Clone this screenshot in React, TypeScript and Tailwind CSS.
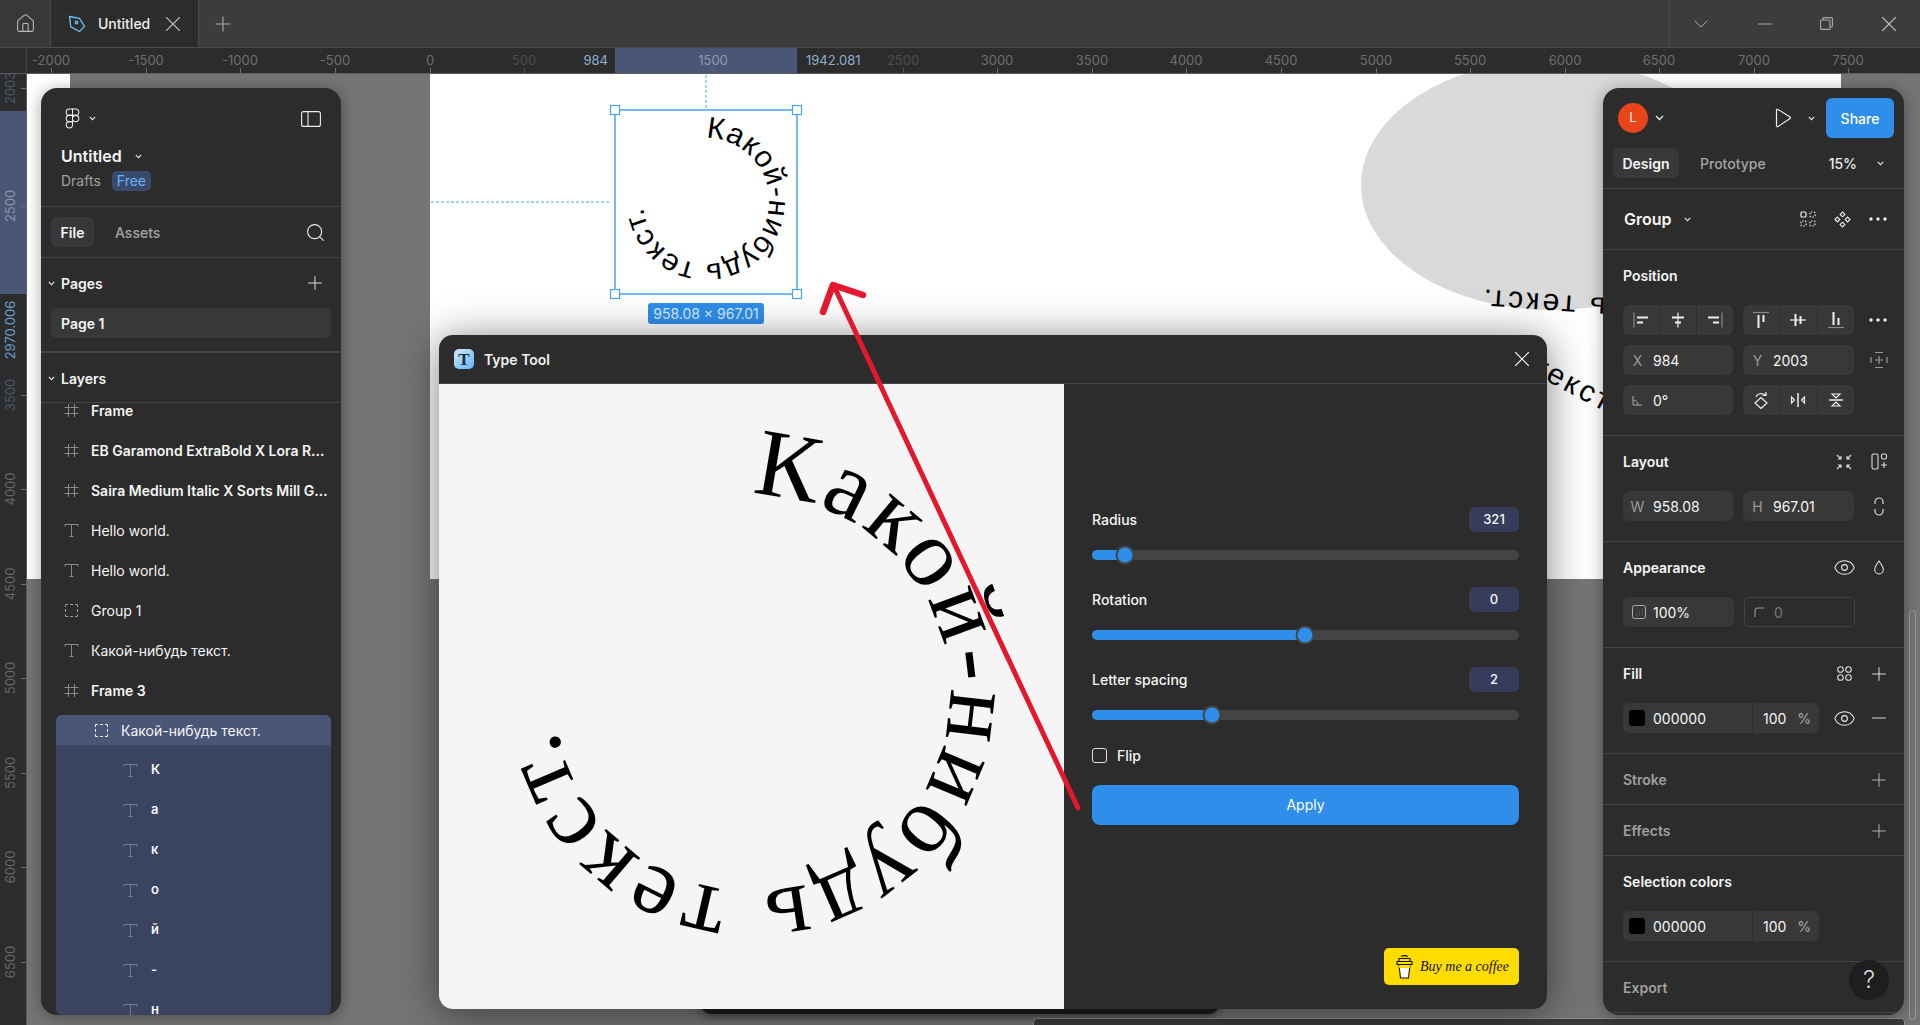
import { ChevronDown, Eye, House, Minus, Plus, Search, X } from "lucide-react";
import type { ReactNode } from "react";

const xTicks = [
  { v: "-2000", x: 51 },
  { v: "-1500", x: 146 },
  { v: "-1000", x: 240 },
  { v: "-500", x: 335 },
  { v: "0", x: 430 },
  { v: "500", x: 524, dim: true },
  { v: "1500", x: 713, tick: "sel" },
  { v: "2500", x: 903, dim: true },
  { v: "3000", x: 997 },
  { v: "3500", x: 1092 },
  { v: "4000", x: 1186 },
  { v: "4500", x: 1281 },
  { v: "5000", x: 1376 },
  { v: "5500", x: 1470 },
  { v: "6000", x: 1565 },
  { v: "6500", x: 1659 },
  { v: "7000", x: 1754 },
  { v: "7500", x: 1848 },
];

const yTicks = [
  { v: "2003", y: 88, dim: true },
  { v: "2500", y: 206, sel: true },
  { v: "3500", y: 395, dim: true },
  { v: "4000", y: 489 },
  { v: "4500", y: 584 },
  { v: "5000", y: 678 },
  { v: "5500", y: 773 },
  { v: "6000", y: 867 },
  { v: "6500", y: 962 },
];

function FigmaLogo() {
  return (
    <svg width="17" height="21" viewBox="0 0 14 20" fill="none" stroke="#f0f0f0" strokeWidth="1">
      <path d="M7 1H4a3 3 0 0 0 0 6h3z" />
      <path d="M7 1h3a3 3 0 0 1 0 6H7z" />
      <path d="M7 7H4a3 3 0 0 0 0 6h3z" />
      <circle cx="10" cy="10" r="3" />
      <path d="M4 13h3v3a3 3 0 1 1-3-3z" />
    </svg>
  );
}

function Chev({ small }: { small?: boolean }) {
  return (
    <svg width={small ? 7 : 9} height={small ? 5 : 6} viewBox="0 0 9 6" fill="none" stroke="#eee" strokeWidth="1.3">
      <path d="M1 1l3.5 3.5L8 1" />
    </svg>
  );
}

function HashIcon() {
  return (
    <svg width="15" height="15" viewBox="0 0 15 15" fill="none" stroke="#8a8a8a" strokeWidth="1">
      <path d="M4.5 1v13M10.5 1v13M0.5 4.5h14M0.5 10.5h14" />
    </svg>
  );
}

function TextIcon({ dim }: { dim?: boolean }) {
  return (
    <svg width="15" height="15" viewBox="0 0 15 15" fill="none" stroke={dim ? "#707a96" : "#8a8a8a"} strokeWidth="1">
      <path d="M1 3.5V1.5h13v2M7.5 1.5v12M5.5 13.5h4" />
    </svg>
  );
}

function GroupIcon({ bright }: { bright?: boolean }) {
  return (
    <svg width="13" height="13" viewBox="0 0 13 13" fill="none" stroke={bright ? "#f0f0f0" : "#9a9a9a"} strokeWidth="1">
      <path d="M0.5 3V.5H3M5 .5h3M10 .5h2.5V3M12.5 5v3M12.5 10v2.5H10M8 12.5H5M3 12.5H.5V10M.5 8V5" />
    </svg>
  );
}

function Icon({ children, w = 18, h = 18, stroke = "#eee" }: { children: ReactNode; w?: number; h?: number; stroke?: string }) {
  return (
    <svg width={w} height={h} viewBox={`0 0 ${w} ${h}`} fill="none" stroke={stroke} strokeWidth="1.2">
      {children}
    </svg>
  );
}

function Dots() {
  return (
    <svg width="18" height="4" viewBox="0 0 18 4" fill="#f0f0f0">
      <circle cx="2" cy="2" r="1.7" />
      <circle cx="9" cy="2" r="1.7" />
      <circle cx="16" cy="2" r="1.7" />
    </svg>
  );
}

function Ruler() {
  return (
    <div className="relative h-[26px] border-b border-[#5c5c5c] bg-[#2c2c2c]">
      <div className="absolute top-0 left-0 h-full w-[27px] border-r border-[#444]" />
      <div className="absolute top-0 left-[615px] h-full w-[182px] bg-[#4a5675]" />
      {xTicks.map((t) => (
        <div key={t.v} className="absolute top-0 h-full" style={{ left: t.x }}>
          <span
            className={`absolute top-[2px] -translate-x-1/2 text-[13px] leading-[20px] ${
              t.dim ? "text-[#4c4c4c]" : t.tick ? "text-[#9099ad]" : "text-[#6e6e6e]"
            }`}
          >
            {t.v}
          </span>
          <span className={`absolute bottom-0 left-0 h-[5px] w-px ${t.dim ? "bg-[#555]" : "bg-[#6e6e6e]"}`} />
        </div>
      ))}
      <span className="absolute top-[2px] right-[1312px] text-[13px] leading-[20px] text-[#8ab0d2]">984</span>
      <span className="absolute top-[2px] left-[806px] text-[13px] leading-[20px] text-[#8ab0d2]">1942.081</span>
    </div>
  );
}

function SideRuler() {
  return (
    <div className="relative h-full w-[27px] shrink-0 overflow-hidden border-r border-[#5c5c5c] bg-[#2c2c2c]">
      <div className="absolute top-[37px] left-0 h-[183px] w-full bg-[#4a5675]" />
      {yTicks.map((t) => (
        <div key={t.v} className="absolute left-0 w-full" style={{ top: t.y - 74 }}>
          <span
            className={`absolute top-0 left-[10px] -translate-x-1/2 -translate-y-1/2 -rotate-90 text-[13px] leading-[16px] ${
              t.sel ? "text-[#8a93aa]" : t.dim ? "text-[#4a5668]" : "text-[#666]"
            }`}
          >
            {t.v}
          </span>
          <span className="absolute top-0 right-0 h-px w-[5px] bg-[#6e6e6e]" />
        </div>
      ))}
      <span className="absolute top-[256px] left-[10px] -translate-x-1/2 -translate-y-1/2 -rotate-90 text-[13px] leading-[16px] text-[#6d9fd0]">
        2970.006
      </span>
    </div>
  );
}

function LayerRow({ kind, label, bold }: { kind: "hash" | "text" | "group"; label: string; bold?: boolean }) {
  return (
    <div className="flex h-[40px] items-center gap-[12px] pr-[12px] pl-[23px]">
      <span className="flex w-[15px] shrink-0 justify-center">
        {kind === "hash" ? <HashIcon /> : kind === "text" ? <TextIcon /> : <GroupIcon />}
      </span>
      <span className={`truncate text-[14px] text-[#f5f5f5] ${bold ? "font-semibold" : "font-normal"}`}>{label}</span>
    </div>
  );
}

function LeftPanel() {
  return (
    <div className="absolute top-[14px] left-[14px] flex h-[927px] w-[300px] flex-col overflow-hidden rounded-[16px] bg-[#2c2c2c] shadow-[0_2px_16px_rgba(0,0,0,0.35)]">
      <div className="h-[119px] shrink-0 border-b border-[#444] px-[20px] pt-[20px]">
        <div className="flex h-[21px] items-center">
          <span className="ml-[3px] flex items-center gap-[8px]">
            <FigmaLogo />
            <Chev small />
          </span>
          <svg className="ml-auto" width="20" height="16" viewBox="0 0 20 16" fill="none" stroke="#eee" strokeWidth="1.1">
            <rect x="0.6" y="0.6" width="18.8" height="14.8" rx="2" />
            <path d="M7 1v14" />
          </svg>
        </div>
        <div className="mt-[17px] flex items-center gap-[13px]">
          <span className="text-[16px] leading-[20px] font-semibold text-[#f5f5f5]">Untitled</span>
          <Chev small />
        </div>
        <div className="mt-[4px] flex items-center gap-[11px]">
          <span className="text-[14px] text-[#a0a0a0]">Drafts</span>
          <span className="rounded-[5px] bg-[#3a4a6b] px-[5px] text-[14px] leading-[20px] text-[#67b4f5]">Free</span>
        </div>
      </div>
      <div className="flex h-[51px] shrink-0 items-center border-b border-[#444] pl-[10px]">
        <span className="flex h-[30px] w-[43px] items-center justify-center rounded-[6px] bg-[#383838] text-[14px] font-semibold text-[#f5f5f5]">
          File
        </span>
        <span className="ml-[21px] text-[14px] font-medium text-[#a5a5a5]">Assets</span>
        <Search className="mr-[15px] ml-auto" size={21} color="#eee" strokeWidth={1.200} />
      </div>
      <div className="h-[95px] shrink-0 border-b-2 border-[#444]">
        <div className="flex h-[50px] items-center">
          <span className="flex w-[20px] pl-[7px]">
            <Chev small />
          </span>
          <span className="text-[14px] font-semibold text-[#f5f5f5]">Pages</span>
          <Plus className="mr-[15px] ml-auto" size={22} color="#eee" strokeWidth={1} />
        </div>
        <div className="mx-[10px] flex h-[30px] items-center rounded-[6px] bg-[#383838] pl-[10px] text-[14px] font-semibold text-[#f5f5f5]">
          Page 1
        </div>
      </div>
      <div className="flex h-[50px] shrink-0 items-center border-b border-[#444] pt-[2px]">
        <span className="flex w-[20px] pl-[7px]">
          <Chev small />
        </span>
        <span className="text-[14px] font-semibold text-[#f5f5f5]">Layers</span>
      </div>
      <div className="flex-1 overflow-hidden">
        <div className="-mt-[13px]">
          <LayerRow kind="hash" label="Frame" bold />
          <LayerRow kind="hash" label="EB Garamond ExtraBold X Lora Regular" bold />
          <LayerRow kind="hash" label="Saira Medium Italic X Sorts Mill Goudy" bold />
          <LayerRow kind="text" label="Hello world." />
          <LayerRow kind="text" label="Hello world." />
          <LayerRow kind="group" label="Group 1" />
          <LayerRow kind="text" label="Какой-нибудь текст." />
          <LayerRow kind="hash" label="Frame 3" bold />
          <div className="mt-[5px] ml-[15px] h-[300px] w-[275px] overflow-hidden rounded-[6px] bg-[#3a4460]">
            <div className="flex h-[30px] items-center gap-[13px] bg-[#4a5675] pl-[39px]">
              <GroupIcon bright />
              <span className="text-[14px] text-[#f5f5f5]">Какой-нибудь текст.</span>
            </div>
            <div className="pt-[5px]">
              {["К", "а", "к", "о", "й", "-", "н"].map((ch, i) => (
                <div key={i} className="flex h-[40px] items-center gap-[13px] pl-[67px]">
                  <TextIcon dim />
                  <span className="text-[13px] font-semibold text-[#f5f5f5]">{ch}</span>
                </div>
              ))}
            </div>
          </div>
        </div>
      </div>
    </div>
  );
}

function Cell({ children }: { children: ReactNode }) {
  return <span className="flex h-full flex-1 items-center justify-center border-l border-[#2c2c2c] first:border-l-0">{children}</span>;
}

function Field({ label, value, wide }: { label: ReactNode; value: string; wide?: boolean }) {
  return (
    <div className={`flex h-[30px] shrink-0 items-center rounded-[6px] bg-[#383838] text-[14px] text-[#f5f5f5] ${wide ? "w-[111px]" : "w-[110px]"}`}>
      <span className="flex w-[29px] justify-center text-[#9a9a9a]">{label}</span>
      <span className="ml-[1px]">{value}</span>
    </div>
  );
}

function ColorRow() {
  return (
    <div className="flex h-[30px] w-[196px] shrink-0 items-center rounded-[6px] bg-[#383838] text-[14px] text-[#f5f5f5]">
      <span className="ml-[6px] h-[16px] w-[16px] rounded-[3px] bg-black" />
      <span className="ml-[8px] w-[99px]">000000</span>
      <span className="flex h-full flex-1 items-center border-l border-[#2c2c2c] pl-[10px]">
        100
        <span className="ml-auto pr-[8px] text-[#aaa]">%</span>
      </span>
    </div>
  );
}

function Slot({ children }: { children: ReactNode }) {
  return <span className="flex w-[24px] justify-center">{children}</span>;
}

function Section({ label, dim, actions, children }: { label: string; dim?: boolean; actions?: ReactNode; children?: ReactNode }) {
  return (
    <div className={`shrink-0 border-b border-[#444] px-[20px] ${children ? "h-[106px]" : "h-[51px]"}`}>
      <div className="flex h-[51px] items-center justify-between">
        <span className={`text-[14px] font-semibold ${dim ? "text-[#a0a0a0]" : "text-[#f5f5f5]"}`}>{label}</span>
        <span className="-mr-[7px] flex items-center gap-[11px]">{actions}</span>
      </div>
      {children && <div className="mt-[4px] flex items-center gap-[10px]">{children}</div>}
    </div>
  );
}

function RightPanel() {
  const plus = <Plus size={22} color="#eee" strokeWidth={1} />;
  const plusDim = <Plus size={22} color="#bbb" strokeWidth={1} />;
  return (
    <div className="absolute top-[14px] left-[1576px] flex h-[927px] w-[301px] flex-col overflow-hidden rounded-[16px] bg-[#2c2c2c] shadow-[0_2px_16px_rgba(0,0,0,0.35)]">
      <div className="h-[101px] shrink-0 border-b border-[#444] px-[10px] pt-[10px]">
        <div className="flex h-[40px] items-center">
          <span className="ml-[5px] flex h-[30px] w-[30px] items-center justify-center rounded-full bg-[#e8451b] text-[13px] text-[#ffe9e0]">
            L
          </span>
          <span className="ml-[7px]">
            <Chev />
          </span>
          <svg className="ml-auto" width="17" height="20" viewBox="0 0 17 20" fill="none" stroke="#eee" strokeWidth="1.2">
            <path d="M1.5 2.2c0-.8.8-1.2 1.5-.8l12 7.6c.6.4.6 1.2 0 1.6L3 18.6c-.7.4-1.500 0-1.500-.8z" />
          </svg>
          <span className="mr-[11px] ml-[16px]">
            <Chev small />
          </span>
          <span className="flex h-[40px] w-[68px] items-center justify-center rounded-[6px] bg-[#2f8eea] text-[14px] font-medium text-white">
            Share
          </span>
        </div>
        <div className="mt-[10px] flex h-[30px] items-center">
          <span className="flex h-[30px] w-[66px] items-center justify-center rounded-[6px] bg-[#383838] text-[14px] font-semibold text-[#f5f5f5]">
            Design
          </span>
          <span className="ml-[21px] text-[14px] font-medium text-[#a5a5a5]">Prototype</span>
          <span className="ml-auto text-[14px] font-medium text-[#eee]">15%</span>
          <span className="mr-[10px] ml-[20px]">
            <Chev small />
          </span>
        </div>
      </div>
      <div className="flex h-[61px] shrink-0 items-center border-b border-[#444] pr-[17px] pl-[21px]">
        <span className="text-[16px] font-semibold text-[#f5f5f5]">Group</span>
        <span className="ml-[12px]">
          <Chev small />
        </span>
        <span className="ml-auto flex items-center gap-[18px]">
          <svg width="16" height="16" viewBox="0 0 16 16" fill="none" stroke="#eee" strokeWidth="1.200">
            <rect x="1" y="1" width="5" height="5" rx="1" />
            <rect x="10" y="1" width="5" height="5" rx="1" strokeDasharray="1.500 1.500" />
            <rect x="1" y="10" width="5" height="5" rx="1" strokeDasharray="1.500 1.500" />
            <rect x="10" y="10" width="5" height="5" rx="1" strokeDasharray="1.500 1.500" />
          </svg>
          <svg width="17" height="17" viewBox="0 0 17 17" fill="none" stroke="#eee" strokeWidth="1.100">
            <path d="M8.500 1l2.400 2.400-2.400 2.400-2.400-2.400zM8.500 11.200l2.400 2.400-2.400 2.400-2.400-2.400zM3.400 6.100l2.400 2.400-2.400 2.400L1 8.500zM13.600 6.100L16 8.500l-2.400 2.400-2.400-2.400z" />
          </svg>
          <Dots />
        </span>
      </div>
      <div className="h-[186px] shrink-0 border-b border-[#444] px-[20px]">
        <div className="flex h-[51px] items-center text-[14px] font-semibold text-[#f5f5f5]">Position</div>
        <div className="mt-[4px] flex flex-col gap-[10px]">
          <div className="flex items-center gap-[10px]">
            <div className="flex h-[30px] w-[110px] shrink-0 items-center rounded-[6px] bg-[#383838]">
              <Cell>
                <Icon>
                  <path d="M2 1.500v15" stroke="#888" />
                  <path d="M5 6.500h11M5 11.500h6" strokeWidth="2" />
                </Icon>
              </Cell>
              <Cell>
                <Icon>
                  <path d="M9 1.500v15" />
                  <path d="M3 6.500h12M6 11.500h6" strokeWidth="2" />
                </Icon>
              </Cell>
              <Cell>
                <Icon>
                  <path d="M16 1.500v15" stroke="#888" />
                  <path d="M2 6.500h11M7 11.500h6" strokeWidth="2" />
                </Icon>
              </Cell>
            </div>
            <div className="flex h-[30px] w-[111px] shrink-0 items-center rounded-[6px] bg-[#383838]">
              <Cell>
                <Icon>
                  <path d="M1 1.500h16" stroke="#888" />
                  <path d="M6.500 4v13M11.500 4v7" strokeWidth="2" />
                </Icon>
              </Cell>
              <Cell>
                <Icon>
                  <path d="M1 9h16" />
                  <path d="M6.500 3v12M11.500 5v8" strokeWidth="2" />
                </Icon>
              </Cell>
              <Cell>
                <Icon>
                  <path d="M1 16.500h16" stroke="#888" />
                  <path d="M6.500 1v13M11.500 7v7" strokeWidth="2" />
                </Icon>
              </Cell>
            </div>
            <span className="ml-[5px]">
              <Dots />
            </span>
          </div>
          <div className="flex items-center gap-[10px]">
            <Field label="X" value="984" />
            <Field label="Y" value="2003" wide />
            <span className="ml-[6px]">
              <Icon>
                <path d="M5 1.500h8M5 16.500h8M1 6v6M17 6v6" stroke="#999" />
                <path d="M9 5v8M5 9h8" stroke="#999" />
              </Icon>
            </span>
          </div>
          <div className="flex items-center gap-[10px]">
            <Field
              label={
                <svg width="11" height="11" viewBox="0 0 11 11" fill="none" stroke="#aaa" strokeWidth="1">
                  <path d="M1 1v9h9M1 5c2.500 0 5 2.500 5 5" />
                </svg>
              }
              value="0°"
            />
            <div className="flex h-[30px] w-[111px] shrink-0 items-center rounded-[6px] bg-[#383838]">
              <Cell>
                <Icon>
                  <path d="M9 6.500L15 12l-6 5.500L3 12zM4 6C5 2.500 10 1.500 13.500 4M14 1v3.500h-3.500" />
                </Icon>
              </Cell>
              <Cell>
                <Icon>
                  <path d="M9 2v14" strokeWidth="1.500" />
                  <path d="M2.500 6v6l3-3zM15.500 6v6l-3-3z" />
                </Icon>
              </Cell>
              <Cell>
                <Icon>
                  <path d="M2 9h14" strokeWidth="1.500" />
                  <path d="M5 3h8l-4 4zM5 15h8l-4-4z" />
                </Icon>
              </Cell>
            </div>
          </div>
        </div>
      </div>
      <Section
        label="Layout"
        actions={
          <>
            <Slot>
              <svg width="16" height="16" viewBox="0 0 16 16" fill="none" stroke="#ddd" strokeWidth="1.100">
                <path d="M1 1l4 4M5 2v3H2M15 1l-4 4M11 2v3h3M1 15l4-4M5 14v-3H2M15 15l-4-4M11 14v-3h3" />
              </svg>
            </Slot>
            <Slot>
              <svg width="17" height="17" viewBox="0 0 17 17" fill="none" stroke="#ddd" strokeWidth="1.100">
                <rect x="1" y="1" width="6" height="15" rx="1.500" />
                <rect x="10.500" y="1" width="5" height="5" rx="1.500" />
                <path d="M13 9v6M10 12h6" />
              </svg>
            </Slot>
          </>
        }
      >
        <Field label="W" value="958.08" />
        <Field label="H" value="967.01" wide />
        <span className="ml-[9px]">
          <svg width="12" height="19" viewBox="0 0 12 19" fill="none" stroke="#ddd" strokeWidth="1.200">
            <path d="M2 7V5a4 4 0 0 1 8 0v2M2 12v2a4 4 0 0 0 8 0v-2" />
          </svg>
        </span>
      </Section>
      <Section
        label="Appearance"
        actions={
          <>
            <Slot>
              <Eye size={23} color="#eee" strokeWidth={1.100} />
            </Slot>
            <Slot>
              <svg width="12" height="17" viewBox="0 0 14 18" fill="none" stroke="#eee" strokeWidth="1.200">
                <path d="M7 1.500C5 4.500 2 7.500 2 11.500a5 5 0 0 0 10 0C12 7.500 9 4.500 7 1.500z" />
              </svg>
            </Slot>
          </>
        }
      >
        <div className="flex h-[30px] w-[111px] shrink-0 items-center rounded-[6px] bg-[#383838] pl-[9px] text-[14px] text-[#f5f5f5]">
          <svg width="14" height="14" viewBox="0 0 14 14" fill="none" stroke="#aaa" strokeWidth="1">
            <rect x="0.500" y="0.500" width="13" height="13" rx="2" />
            <path d="M4 10h.500M7 10h.500M10 10h.500M7 7.500h.500M10 7.500h.500M10 5h.500" />
          </svg>
          <span className="ml-[7px]">100%</span>
        </div>
        <div className="flex h-[30px] w-[111px] shrink-0 items-center rounded-[6px] border border-[#444] pl-[9px] text-[14px] text-[#777]">
          <svg width="11" height="11" viewBox="0 0 11 11" fill="none" stroke="#999" strokeWidth="1.100">
            <path d="M1 10V4a3 3 0 0 1 3-3h6" />
          </svg>
          <span className="ml-[9px]">0</span>
        </div>
      </Section>
      <Section
        label="Fill"
        actions={
          <>
            <Slot>
              <svg width="15" height="15" viewBox="0 0 15 15" fill="none" stroke="#ddd" strokeWidth="1.100">
                <circle cx="3.500" cy="3.500" r="2.800" />
                <circle cx="11.500" cy="3.500" r="2.800" />
                <circle cx="3.500" cy="11.500" r="2.800" />
                <circle cx="11.500" cy="11.500" r="2.800" />
              </svg>
            </Slot>
            <Slot>{plus}</Slot>
          </>
        }
      >
        <ColorRow />
        <span className="ml-[3px] flex items-center gap-[11px]">
          <Slot>
            <Eye size={23} color="#eee" strokeWidth={1.100} />
          </Slot>
          <Slot>
            <Minus size={22} color="#eee" strokeWidth={1} />
          </Slot>
        </span>
      </Section>
      <Section label="Stroke" dim actions={<Slot>{plusDim}</Slot>} />
      <Section label="Effects" dim actions={<Slot>{plusDim}</Slot>} />
      <Section label="Selection colors">
        <ColorRow />
      </Section>
      <Section label="Export" dim />
      <div className="absolute top-[872px] left-[246px] flex h-[40px] w-[40px] items-center justify-center rounded-full bg-[#1e1e1e] text-[24px] font-light text-[#ddd]">
        ?
      </div>
    </div>
  );
}

function Slider({ label, value, pos }: { label: string; value: string; pos: number }) {
  return (
    <div className="mb-[27px]">
      <div className="flex h-[25px] items-center justify-between">
        <span className="text-[14px] font-medium text-[#f5f5f5]">{label}</span>
        <span className="flex h-[25px] w-[50px] items-center justify-center rounded-[6px] bg-[#363d5c] text-[13px] font-medium text-[#f5f5f5]">
          {value}
        </span>
      </div>
      <div className="relative mt-[18px] h-[10px] rounded-full bg-[#444]">
        <div className="h-full rounded-full bg-[#2f8eea]" style={{ width: pos }} />
        <div
          className="absolute top-1/2 box-content h-[15px] w-[15px] -translate-x-1/2 -translate-y-1/2 rounded-full border-[2px] border-[#454545] bg-[#2f8eea]"
          style={{ left: pos }}
        />
      </div>
    </div>
  );
}

function CircleText({ size, r, spacing, family, id }: { size: number; r: number; spacing: number; family: string; id: string }) {
  return (
    <>
      <defs>
        <path id={id} d={`M0 ${-r}A${r} ${r} 0 1 1 -0.01 ${-r}`} />
      </defs>
      <text fontFamily={family} fontSize={size} letterSpacing={spacing} fill="#000">
        <textPath href={`#${id}`}>Какой-нибудь текст.</textPath>
      </text>
    </>
  );
}

function TypeToolModal() {
  return (
    <div className="absolute top-[261px] left-[412px] flex h-[674px] w-[1108px] flex-col overflow-hidden rounded-[14px] bg-[#2c2c2c] shadow-[0_4px_40px_rgba(0,0,0,0.5)]">
      <div className="flex h-[49px] shrink-0 items-center border-b border-[#444] pr-[12px] pl-[15px]">
        <span className="flex h-[20px] w-[20px] items-center justify-center rounded-[5px] bg-gradient-to-br from-[#cfe9ff] to-[#62b2f5] font-['Liberation_Serif',serif] text-[17px] leading-none font-bold text-[#1d2a3a]">
          T
        </span>
        <span className="ml-[10px] text-[14px] font-semibold text-[#f0f0f0]">Type Tool</span>
        <X className="ml-auto" size={26} color="#eee" strokeWidth={1} />
      </div>
      <div className="flex min-h-0 flex-1">
        <div className="w-[625px] shrink-0 bg-[#f5f5f5]">
          <svg width="625" height="625" viewBox="-312.500 -309 625 625">
            <CircleText id="big-arc" size={96} r={198} spacing={4.500} family="'Liberation Serif', serif" />
          </svg>
        </div>
        <div className="flex flex-1 flex-col px-[28px] pt-[123px] pb-[24px]">
          <Slider label="Radius" value="321" pos={33} />
          <Slider label="Rotation" value="0" pos={213} />
          <Slider label="Letter spacing" value="2" pos={120} />
          <div className="mt-[1px] flex h-[15px] items-center gap-[10px]">
            <span className="h-[15px] w-[15px] rounded-[3px] border border-[#ddd]" />
            <span className="text-[14px] font-medium text-[#f5f5f5]">Flip</span>
          </div>
          <div className="mt-[22px] flex h-[40px] items-center justify-center rounded-[8px] bg-[#2f8eea] pb-[2px] text-[14px] font-normal text-white">
            Apply
          </div>
          <div className="mt-auto flex h-[37px] w-[135px] items-center gap-[7px] self-end rounded-[5px] bg-[#ffdd00] pl-[12px]">
            <svg width="17" height="25" viewBox="0 0 17 25" fill="none" stroke="#111" strokeWidth="1.100">
              <path d="M3 11l1.500 13h8L14 11z" fill="#fff" />
              <path d="M1 7.500h15v3H1zM3 7.500V4.500h11v3M5 2.500c2-1 5-1 7 0" />
              <path d="M3 11h11l-.3 3H3.300z" fill="#ffdd00" stroke="none" />
            </svg>
            <span className="font-['Liberation_Serif',serif] text-[14px] text-[#111] italic">Buy me a coffee</span>
          </div>
        </div>
      </div>
    </div>
  );
}

function Canvas() {
  return (
    <div className="relative flex-1 overflow-hidden bg-[#757575]">
      <div className="absolute top-0 left-0 h-[505px] w-[43px] bg-white" />
      <div className="absolute top-0 left-[403px] h-[505px] w-[1411px] overflow-hidden bg-white">
        <div className="absolute top-[-14px] left-[931px] h-[250px] w-[382px] rounded-[50%] bg-[#d9d9d9]" />
      </div>

      <svg className="absolute top-0 left-0" width="1893" height="951" viewBox="27 74 1893 951">
        <g fontFamily="'Liberation Sans', sans-serif" fontSize="30" letterSpacing="3" fill="#000">
          <text transform="translate(1606 298) rotate(184)">ь текст.</text>
          <text transform="translate(1530 372) rotate(28)">текст.</text>
        </g>
        <g transform="translate(706 201)">
          <CircleText id="small-arc" size={30} r={63} spacing={0.900} family="'Liberation Sans', sans-serif" />
        </g>
        <path d="M706 75v33M431 202h180" stroke="#4ba3f5" strokeDasharray="3 2" fill="none" />
        <rect x="615" y="110" width="182" height="184" fill="none" stroke="#4ba3f5" strokeWidth="1.500" />
        {[
          [615, 110],
          [797, 110],
          [615, 294],
          [797, 294],
        ].map(([x, y]) => (
          <rect key={`${x}-${y}`} x={x - 4.500} y={y - 4.500} width="9" height="9" fill="#fff" stroke="#4ba3f5" strokeWidth="1.200" />
        ))}
      </svg>

      <div className="absolute top-[229px] left-[621px] flex h-[21px] w-[116px] items-center justify-center rounded-[3px] bg-[#2f8eea] text-[14px] text-[#d6ebff]">
        958.08 × 967.01
      </div>

      <div className="absolute top-[900px] left-[673px] h-[40px] w-[520px] rounded-b-[12px] bg-[#1c1c1c] shadow-[0_2px_10px_rgba(0,0,0,0.5)]" />
      <div className="absolute top-[944px] left-[1006px] h-[12px] w-[872px] rounded-t-[4px] border border-[#8c8c8c] bg-[#3a3a3a]" />
      <div className="absolute top-[536px] left-[1882px] h-[410px] w-[7px] rounded-full border border-[#9c9c9c]" />

      <LeftPanel />
      <RightPanel />
      <TypeToolModal />

      <svg className="pointer-events-none absolute top-0 left-0" width="1893" height="951" viewBox="27 74 1893 951">
        <g fill="none" stroke="#e3182f" strokeLinecap="round" strokeLinejoin="round">
          <path d="M1078 808L834 286" strokeWidth="5" />
          <path d="M823 312L833 285L863 295" strokeWidth="6.500" />
        </g>
      </svg>
    </div>
  );
}

export default function App() {
  return (
    <div className="flex h-[1025px] w-[1920px] flex-col overflow-hidden bg-[#3c3c3c] font-['Inter',sans-serif]">
      <div className="flex h-[48px] shrink-0 items-stretch border-b border-[#4a4a4a] bg-[#3c3c3c]">
        <div className="flex w-[51px] items-center justify-center border-r border-[#4a4a4a] bg-[#383838]">
          <House size={21} color="#bbb" strokeWidth={1.200} />
        </div>
        <div className="flex w-[148px] items-center border-r border-[#4a4a4a] bg-[#2c2c2c] pl-[17px]">
          <svg width="18" height="18" viewBox="0 0 18 18" fill="none" stroke="#6fc0f8" strokeWidth="1.300">
            <path d="M1.500 1.500l10 1.800 5 8.200-5 5-8.700-4.600z" />
            <circle cx="8.500" cy="7.500" r="1.300" />
          </svg>
          <span className="ml-[12px] text-[14px] font-medium text-[#eee]">Untitled</span>
          <X className="ml-[10px]" size={26} color="#bbb" strokeWidth={1} />
        </div>
        <div className="ml-[12px] flex items-center">
          <Plus size={24} color="#aaa" strokeWidth={1.100} />
        </div>
        <div className="ml-auto flex w-[251px] items-center border-l border-[#4a4a4a] pl-[19px]">
          <ChevronDown size={24} color="#aaa" strokeWidth={1} />
          <Minus className="ml-[41px]" size={22} color="#aaa" strokeWidth={1.200} />
          <svg className="ml-[44px]" width="13" height="13" viewBox="0 0 13 13" fill="none" stroke="#aaa" strokeWidth="1.100">
            <rect x="0.600" y="3" width="9.400" height="9.400" rx="1" />
            <path d="M3 3V1.500A1 1 0 0 1 4 .6h7.400a1 1 0 0 1 1 1V9a1 1 0 0 1-1 1H10" />
          </svg>
          <X className="ml-[43px]" size={26} color="#bbb" strokeWidth={1} />
        </div>
      </div>
      <Ruler />
      <div className="flex min-h-0 flex-1">
        <SideRuler />
        <Canvas />
      </div>
    </div>
  );
}
